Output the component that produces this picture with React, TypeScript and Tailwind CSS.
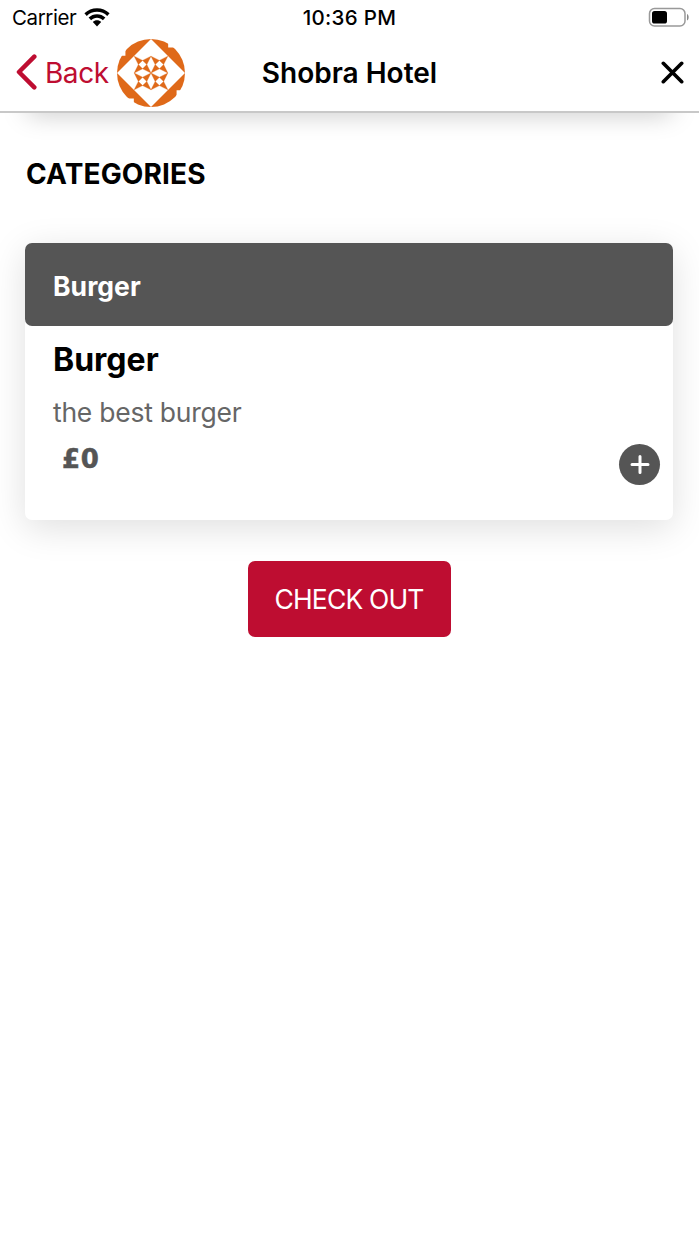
const PATCHES = [[-50, -50], [0, -50], [-50, 0], [0, 0]];

function Logo() {
  return (
    <svg className="ml-[8px] size-[68px] shrink-0" viewBox="-101 -101 202 202">
      <circle r="101" fill="#df6919" />
      <path d="M0-101 101 0 0 101-101 0Z" fill="#fff" />
      <path d="M-101-101h25v50h-25ZM51-101h50v25h-50ZM76 51h25v50h-25ZM-101 76h50v25h-50Z" fill="#fff" />
      {PATCHES.map(([x, y]) => (
        <path
          key={`${x},${y}`}
          transform={`translate(${x} ${y})`}
          d="M0 0 25 12.500 12.500 25ZM50 0 37.500 25 25 12.500ZM50 50 25 37.500 37.500 25ZM0 50 12.500 25 25 37.500Z"
          fill="#df6919"
          stroke="#df6919"
          strokeWidth="1"
        />
      ))}
    </svg>
  );
}

function StatusBar() {
  return (
    <div className="grid h-9 grid-cols-3 items-center">
      <div className="flex items-center pl-[12px]">
        <span className="text-[20.5px] leading-9 tracking-[-0.4px]">Carrier</span>
        <svg className="-mt-0.5 ml-2 h-[19px] w-[26px]" viewBox="0 0 26 19">
          <path d="M13 0.300C8.200 0.300 3.700 2.200 .4 5.300L2.800 7.900C5.500 5.300 9.100 3.800 13 3.800S20.500 5.300 23.200 7.900L25.600 5.300C22.300 2.200 17.800 .3 13 .3Z" />
          <path d="M13 6.300C9.800 6.300 6.900 7.500 4.600 9.600L7.100 12.200C8.700 10.700 10.700 9.800 13 9.800S17.300 10.700 18.900 12.200L21.400 9.600C19.100 7.500 16.200 6.300 13 6.300Z" />
          <path d="M13 12.200C11.400 12.200 9.900 12.800 8.800 13.900L13 18.400 17.200 13.900C16.100 12.800 14.600 12.200 13 12.200Z" />
        </svg>
      </div>
      <div className="text-center text-[20.500px] font-medium leading-9 tracking-[0.3px]">10:36 PM</div>
      <div className="flex justify-end pr-[9px]">
        <svg className="-mt-0.5 h-5 w-[42px]" viewBox="0 0 42 20">
          <rect x="1.500" y="1.500" width="35.500" height="17.500" rx="5" fill="none" stroke="#999" strokeWidth="1.500" />
          <rect x="4" y="4" width="15" height="12.500" rx="2.600" />
          <path d="M39 7c2.200.8 2.200 5.600 0 6.400Z" fill="#888" />
        </svg>
      </div>
    </div>
  );
}

function Header() {
  return (
    <header className="h-[113px] border-b-2 border-[#c8c8c8] bg-white">
      <StatusBar />
      <div className="grid h-[73px] grid-cols-[1fr_auto_1fr] items-center">
        <div className="flex items-center pl-4">
          <svg className="-mt-px h-9 w-[22px]" viewBox="0 0 22 36" fill="none" stroke="#be0d31" strokeWidth="4.500" strokeLinecap="round" strokeLinejoin="round">
            <path d="M18.300 2.700 3 18l15.300 15.300" />
          </svg>
          <span className="ml-[7px] text-[28px] tracking-[-0.45px] text-[#be0d31]">Back</span>
          <Logo />
        </div>
        <h1 className="text-[28px] font-semibold">Shobra Hotel</h1>
        <div className="flex justify-end pr-[15px]">
          <svg className="size-[23px]" viewBox="0 0 23 23" fill="none" stroke="#000" strokeWidth="3.600" strokeLinecap="round">
            <path d="m2.300 2.300 18.400 18.400M20.700 2.300 2.300 20.700" />
          </svg>
        </div>
      </div>
    </header>
  );
}

export default function App() {
  return (
    <div className="h-[1242px] w-[699px] overflow-hidden bg-white font-['Inter',sans-serif] text-black">
      <Header />
      <div className="h-7 overflow-hidden">
        <div className="mx-[28px] -mt-5 h-5 shadow-[0_0_26px_rgba(0,0,0,0.25)]" />
      </div>
      <main className="pl-[25px] pr-[26px] pt-[13px]">
        <h2 className="pl-px text-[28px] font-bold leading-10 tracking-[0.15px]">CATEGORIES</h2>
        <section className="mt-[49px] h-[277px] rounded-[7px] bg-white shadow-[0_8px_36px_rgba(0,0,0,0.13)]">
          <div className="flex h-[83px] items-center rounded-[7px] bg-[#555] pl-[28px] pt-1 text-[26.500px] font-bold tracking-[0.05px] text-white">Burger</div>
          <div className="flex justify-between pl-[28px] pr-[13px]">
            <div>
              <h3 className="mt-[14px] text-[32px] font-bold leading-10">Burger</h3>
              <p className="mt-[14px] text-[26.500px] leading-9 tracking-[-0.25px] text-[#666]">the best burger</p>
              <p className="ml-[9px] mt-[11px] font-['DejaVu_Sans',sans-serif] text-[26px] font-bold leading-9 tracking-[0.6px] text-[#555] [-webkit-text-stroke:0.5px_#555]">£0</p>
            </div>
            <button className="mt-[118px] flex size-[41px] items-center justify-center rounded-full bg-[#555]">
              <svg className="size-5" viewBox="0 0 20 20" stroke="#fff" strokeWidth="3" strokeLinecap="round">
                <path d="M10 1.500v16M2 9.500h16" />
              </svg>
            </button>
          </div>
        </section>
        <button className="mx-auto mt-[41px] flex h-[76px] w-[203px] items-center justify-center rounded-[7px] bg-[#be0d31] pt-[2px] text-[26.500px] tracking-[-0.85px] text-white">CHECK OUT</button>
      </main>
    </div>
  );
}
